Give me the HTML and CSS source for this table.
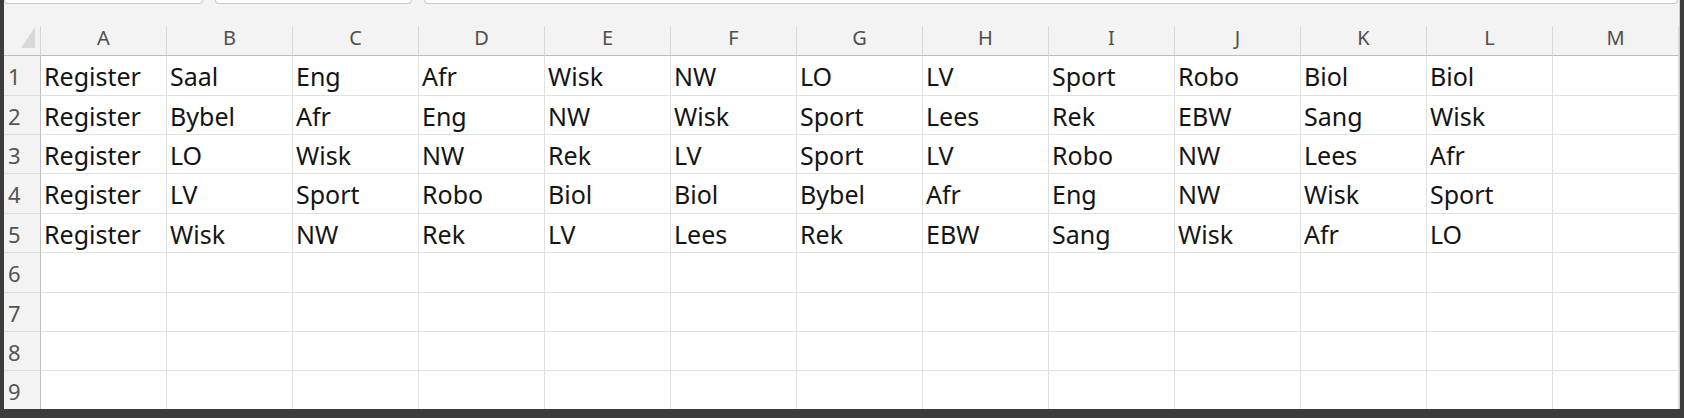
FILE: index.html
```html
<!DOCTYPE html>
<html>
<head>
<meta charset="utf-8">
<link rel="stylesheet" href="styles.css">
</head>
<body>
<div class="frame">
  <div class="app">
    <div class="topbar">
      <div class="box box-name"></div>
      <div class="box box-fx"></div>
      <div class="box box-formula"></div>
    </div>
    <div class="sheet">
      <div class="corner"><svg width="14" height="21" viewBox="0 0 14 21"><polygon points="0,21 14,0 14,21" fill="#d9d9d9"/></svg></div>
      <div class="ch">A</div><div class="ch">B</div><div class="ch">C</div><div class="ch">D</div><div class="ch">E</div><div class="ch">F</div><div class="ch">G</div><div class="ch">H</div><div class="ch">I</div><div class="ch">J</div><div class="ch">K</div><div class="ch">L</div><div class="ch">M</div>

      <div class="rh">1</div><div class="c">Register</div><div class="c">Saal</div><div class="c">Eng</div><div class="c">Afr</div><div class="c">Wisk</div><div class="c">NW</div><div class="c">LO</div><div class="c">LV</div><div class="c">Sport</div><div class="c">Robo</div><div class="c">Biol</div><div class="c">Biol</div><div class="c"></div>

      <div class="rh">2</div><div class="c">Register</div><div class="c">Bybel</div><div class="c">Afr</div><div class="c">Eng</div><div class="c">NW</div><div class="c">Wisk</div><div class="c">Sport</div><div class="c">Lees</div><div class="c">Rek</div><div class="c">EBW</div><div class="c">Sang</div><div class="c">Wisk</div><div class="c"></div>

      <div class="rh">3</div><div class="c">Register</div><div class="c">LO</div><div class="c">Wisk</div><div class="c">NW</div><div class="c">Rek</div><div class="c">LV</div><div class="c">Sport</div><div class="c">LV</div><div class="c">Robo</div><div class="c">NW</div><div class="c">Lees</div><div class="c">Afr</div><div class="c"></div>

      <div class="rh">4</div><div class="c">Register</div><div class="c">LV</div><div class="c">Sport</div><div class="c">Robo</div><div class="c">Biol</div><div class="c">Biol</div><div class="c">Bybel</div><div class="c">Afr</div><div class="c">Eng</div><div class="c">NW</div><div class="c">Wisk</div><div class="c">Sport</div><div class="c"></div>

      <div class="rh">5</div><div class="c">Register</div><div class="c">Wisk</div><div class="c">NW</div><div class="c">Rek</div><div class="c">LV</div><div class="c">Lees</div><div class="c">Rek</div><div class="c">EBW</div><div class="c">Sang</div><div class="c">Wisk</div><div class="c">Afr</div><div class="c">LO</div><div class="c"></div>

      <div class="rh">6</div><div class="c"></div><div class="c"></div><div class="c"></div><div class="c"></div><div class="c"></div><div class="c"></div><div class="c"></div><div class="c"></div><div class="c"></div><div class="c"></div><div class="c"></div><div class="c"></div><div class="c"></div>

      <div class="rh">7</div><div class="c"></div><div class="c"></div><div class="c"></div><div class="c"></div><div class="c"></div><div class="c"></div><div class="c"></div><div class="c"></div><div class="c"></div><div class="c"></div><div class="c"></div><div class="c"></div><div class="c"></div>

      <div class="rh">8</div><div class="c"></div><div class="c"></div><div class="c"></div><div class="c"></div><div class="c"></div><div class="c"></div><div class="c"></div><div class="c"></div><div class="c"></div><div class="c"></div><div class="c"></div><div class="c"></div><div class="c"></div>

      <div class="rh">9</div><div class="c"></div><div class="c"></div><div class="c"></div><div class="c"></div><div class="c"></div><div class="c"></div><div class="c"></div><div class="c"></div><div class="c"></div><div class="c"></div><div class="c"></div><div class="c"></div><div class="c"></div>
    </div>
  </div>
</div>
</body>
</html>
```

FILE: styles.css
```css
html, body {
  margin: 0;
  padding: 0;
  background: #3c3c3c;
}
body {
  width: 1684px;
  height: 418px;
  overflow: hidden;
  font-family: "Noto Sans", "Open Sans", sans-serif;
}
.frame {
  padding: 0 4px 9px 4px;
  height: 418px;
  box-sizing: border-box;
}
.app {
  width: 1676px;
  height: 409px;
  background: #f3f3f3;
  border-right: 1px solid #cfcfcf;
  box-sizing: border-box;
  overflow: hidden;
  display: flex;
  flex-direction: column;
}
.topbar {
  height: 26px;
  flex: none;
  display: flex;
  gap: 12px;
  align-items: flex-start;
}
.box {
  height: 4px;
  background: #fcfcfc;
  border: 1px solid #c9c9c9;
  border-top: none;
  border-radius: 0 0 6px 6px;
  box-sizing: border-box;
}
.box-name { width: 199px; }
.box-fx { width: 197px; }
.box-formula { flex: 1; margin-right: 1px; }
.sheet {
  display: grid;
  grid-template-columns: 37px repeat(13, 126px);
  grid-template-rows: 30px 40px 39px 39px 40px 39px 40px 39px 39px 39px;
  flex: none;
}
.corner {
  border-right: 1px solid #d6d6d6;
  border-bottom: 1px solid #bdbdbd;
  display: flex;
  justify-content: flex-end;
  align-items: flex-end;
  padding: 0 5px 7px 0;
}
.ch {
  border-right: 1px solid #d9d9d9;
  border-bottom: 1px solid #bdbdbd;
  text-align: center;
  font-size: 20px;
  line-height: 24px;
  color: #4f4f4f;
}
.rh {
  background: #f3f3f3;
  border-right: 1px solid #bdbdbd;
  border-bottom: 1px solid #dedede;
  font-size: 22px;
  line-height: 38px;
  padding-top: 1px;
  color: #555;
  padding-left: 4px;
}
.c {
  background: #fff;
  border-right: 1px solid #e1e1e1;
  border-bottom: 1px solid #e1e1e1;
  font-size: 25px;
  line-height: 38px;
  padding-top: 1px;
  color: #141414;
  padding-left: 3px;
  white-space: nowrap;
  overflow: hidden;
}
```
